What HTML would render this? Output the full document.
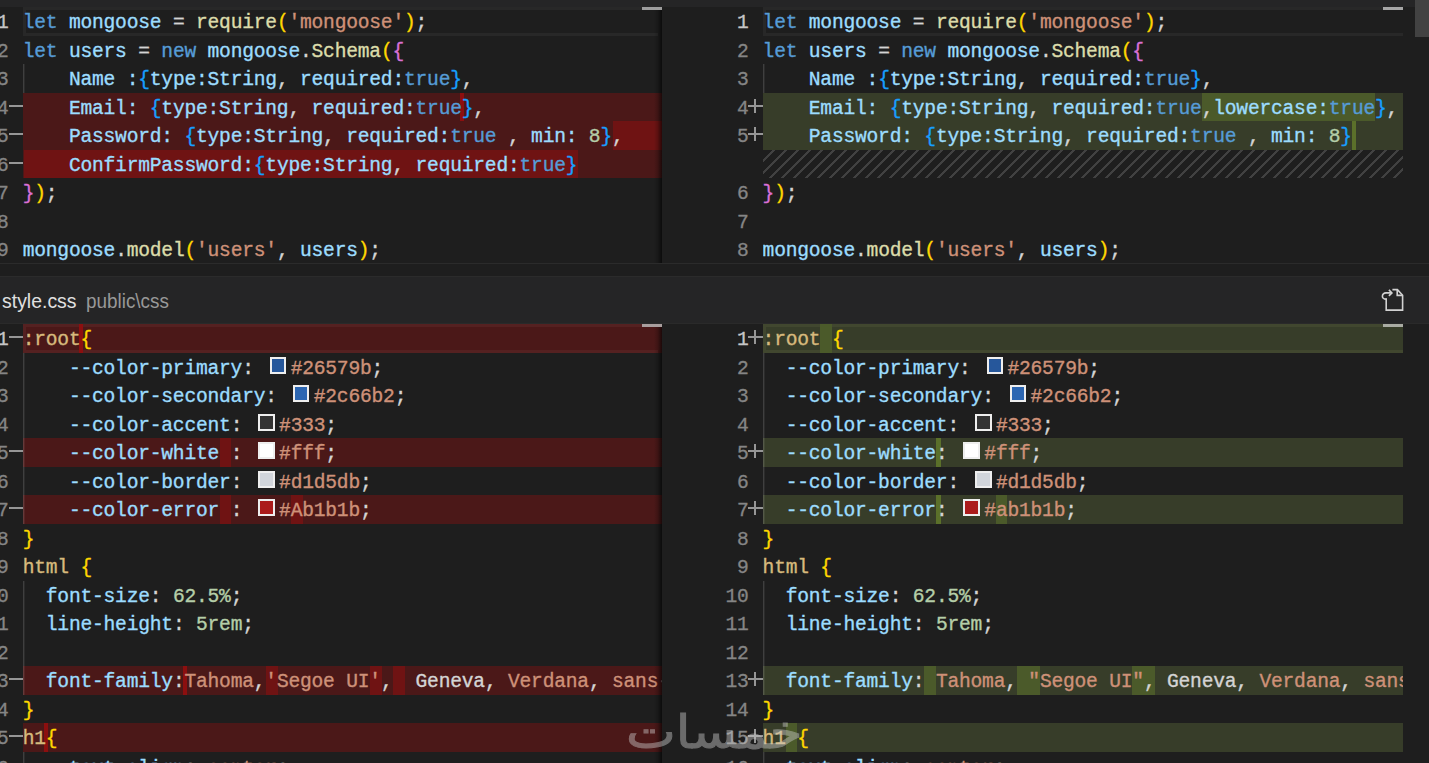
<!DOCTYPE html>
<html lang="en"><head><meta charset="utf-8"><title>Diff view</title>
<style>
html,body{margin:0;padding:0}
body{width:1429px;height:763px;overflow:hidden;background:#1e1e1e;position:relative;font-family:"Liberation Mono","DejaVu Sans Mono",monospace}
.r{position:absolute}
.cl{letter-spacing:-0.2069px;-webkit-text-stroke-width:0.35px;position:absolute;height:28.5px;line-height:28.5px;font-size:19.6px;white-space:pre;overflow:hidden}
.cl span{position:absolute;top:0;white-space:pre}
.ln{letter-spacing:-0.2069px;-webkit-text-stroke-width:0.3px;position:absolute;width:60px;text-align:right;height:28.5px;line-height:28.5px;font-size:19.6px;color:#858585;white-space:pre}
.ln.act{color:#c6c6c6}
.sg{background:#969696}
.sw{position:absolute;top:2.1px;width:16.6px;height:16.6px;box-sizing:border-box;border:2px solid #eeeeee}
.hatch{background-image:linear-gradient(-45deg,#414141 12.5%,transparent 12.5%,transparent 50%,#414141 50%,#414141 62.5%,transparent 62.5%,transparent 100%);background-size:12px 12px}
.hdr{position:absolute;left:0;top:276px;width:1429px;height:48px;background:#252526;box-sizing:border-box;border-top:1.4px solid #2b2b2b;border-bottom:1px solid #2a2a2a}
.hdr span{position:absolute;font-family:"Liberation Sans","DejaVu Sans",sans-serif;white-space:pre;line-height:24px;top:12.1px;transform-origin:0 50%}
.wm{position:absolute;left:626px;top:702.2px;direction:rtl;font-family:"DejaVu Sans",sans-serif;font-size:46px;line-height:60px;color:#cdcdcd;-webkit-text-stroke:1px #cdcdcd;opacity:0.44;white-space:pre;transform:scaleX(1.15);transform-origin:0 0}

</style></head><body>
<div class="r" style="left:0;top:0;width:1429px;height:6.6px;background:#252526"></div>
<div class="r" style="left:23.0px;top:7.25px;width:635.1px;height:28.5px;box-sizing:border-box;border:3px solid #282828;border-right:none"></div>
<div class="ln act" style="left:-51.4px;top:9.25px">1</div>
<div class="cl" style="left:22.70px;top:9.25px;width:638.9px"><span style="left:0.00px;color:#569cd6">let</span><span style="left:34.66px;color:#9cdcfe"> mongoose</span><span style="left:138.66px;color:#d4d4d4"> =</span><span style="left:161.77px;color:#dcdcaa"> require</span><span style="left:254.21px;color:#ffd700">(</span><span style="left:265.76px;color:#ce9178">'mongoose'</span><span style="left:381.31px;color:#ffd700">)</span><span style="left:392.87px;color:#d4d4d4">;</span></div>
<div class="ln" style="left:-51.4px;top:37.75px">2</div>
<div class="cl" style="left:22.70px;top:37.75px;width:638.9px"><span style="left:0.00px;color:#569cd6">let</span><span style="left:34.66px;color:#9cdcfe"> users</span><span style="left:104.00px;color:#d4d4d4"> =</span><span style="left:127.11px;color:#569cd6"> new</span><span style="left:173.32px;color:#9cdcfe"> mongoose</span><span style="left:277.32px;color:#d4d4d4">.</span><span style="left:288.88px;color:#dcdcaa">Schema</span><span style="left:358.20px;color:#ffd700">(</span><span style="left:369.76px;color:#da70d6">{</span></div>
<div class="ln" style="left:-51.4px;top:66.25px">3</div>
<div class="cl" style="left:22.70px;top:66.25px;width:638.9px"><span style="left:0.00px;color:#9cdcfe">    Name</span><span style="left:92.44px;color:#9cdcfe"> :</span><span style="left:115.55px;color:#179fff">{</span><span style="left:127.10px;color:#9cdcfe">type:String</span><span style="left:254.21px;color:#d4d4d4">,</span><span style="left:265.76px;color:#9cdcfe"> required:</span><span style="left:381.31px;color:#569cd6">true</span><span style="left:427.53px;color:#179fff">}</span><span style="left:439.09px;color:#d4d4d4">,</span></div>
<div class="r" style="left:23.0px;top:92.75px;width:638.6px;height:28.5px;background:#4b1818"></div>
<div class="r" style="left:460.29px;top:92.75px;width:4.2px;height:28.5px;background:#8c0f0f"></div>
<div class="ln" style="left:-51.4px;top:94.75px">4</div>
<div class="r sg" style="left:8.8px;top:104.55px;width:14.4px;height:2px"></div>
<div class="cl" style="left:22.70px;top:94.75px;width:638.9px"><span style="left:0.00px;color:#9cdcfe">    Email:</span><span style="left:115.55px;color:#179fff"> {</span><span style="left:138.66px;color:#9cdcfe">type:String</span><span style="left:265.76px;color:#d4d4d4">,</span><span style="left:277.32px;color:#9cdcfe"> required:</span><span style="left:392.87px;color:#569cd6">true</span><span style="left:439.09px;color:#179fff">}</span><span style="left:450.65px;color:#d4d4d4">,</span></div>
<div class="r" style="left:23.0px;top:121.25px;width:638.6px;height:28.5px;background:#4b1818"></div>
<div class="r" style="left:612.80px;top:121.25px;width:48.80px;height:28.5px;background:#6f1313"></div>
<div class="ln" style="left:-51.4px;top:123.25px">5</div>
<div class="r sg" style="left:8.8px;top:133.05px;width:14.4px;height:2px"></div>
<div class="cl" style="left:22.70px;top:123.25px;width:638.9px"><span style="left:0.00px;color:#9cdcfe">    Password:</span><span style="left:150.22px;color:#179fff"> {</span><span style="left:173.32px;color:#9cdcfe">type:String</span><span style="left:300.43px;color:#d4d4d4">,</span><span style="left:311.98px;color:#9cdcfe"> required:</span><span style="left:427.53px;color:#569cd6">true</span><span style="left:473.75px;color:#d4d4d4"> ,</span><span style="left:496.87px;color:#9cdcfe"> min:</span><span style="left:554.64px;color:#b5cea8"> 8</span><span style="left:577.75px;color:#179fff">}</span><span style="left:589.30px;color:#d4d4d4">,</span></div>
<div class="r" style="left:23.0px;top:149.75px;width:638.6px;height:28.5px;background:#4b1818"></div>
<div class="r" style="left:23.50px;top:149.75px;width:554.64px;height:28.5px;background:#6f1313"></div>
<div class="ln" style="left:-51.4px;top:151.75px">6</div>
<div class="r sg" style="left:8.8px;top:161.55px;width:14.4px;height:2px"></div>
<div class="cl" style="left:22.70px;top:151.75px;width:638.9px"><span style="left:0.00px;color:#9cdcfe">    ConfirmPassword:</span><span style="left:231.10px;color:#179fff">{</span><span style="left:242.66px;color:#9cdcfe">type:String</span><span style="left:369.76px;color:#d4d4d4">,</span><span style="left:381.31px;color:#9cdcfe"> required:</span><span style="left:496.87px;color:#569cd6">true</span><span style="left:543.09px;color:#179fff">}</span></div>
<div class="ln" style="left:-51.4px;top:180.25px">7</div>
<div class="cl" style="left:22.70px;top:180.25px;width:638.9px"><span style="left:0.00px;color:#da70d6">}</span><span style="left:11.55px;color:#ffd700">)</span><span style="left:23.11px;color:#d4d4d4">;</span></div>
<div class="ln" style="left:-51.4px;top:208.75px">8</div>
<div class="ln" style="left:-51.4px;top:237.25px">9</div>
<div class="cl" style="left:22.70px;top:237.25px;width:638.9px"><span style="left:0.00px;color:#9cdcfe">mongoose</span><span style="left:92.44px;color:#d4d4d4">.</span><span style="left:104.00px;color:#dcdcaa">model</span><span style="left:161.77px;color:#ffd700">(</span><span style="left:173.33px;color:#ce9178">'users'</span><span style="left:254.21px;color:#d4d4d4">,</span><span style="left:265.76px;color:#9cdcfe"> users</span><span style="left:335.09px;color:#ffd700">)</span><span style="left:346.65px;color:#d4d4d4">;</span></div>
<div class="r" style="left:23.0px;top:64.25px;width:1px;height:28.50px;background:rgba(255,255,255,0.15)"></div>
<div class="r" style="left:24.0px;top:64.25px;width:1px;height:28.50px;background:rgba(255,255,255,0.06)"></div>
<div class="r" style="left:763.0px;top:7.25px;width:640.0px;height:28.5px;box-sizing:border-box;border:3px solid #282828;border-right:none"></div>
<div class="ln act" style="left:688.6px;top:9.25px">1</div>
<div class="cl" style="left:762.60px;top:9.25px;width:640.4px"><span style="left:0.00px;color:#569cd6">let</span><span style="left:34.66px;color:#9cdcfe"> mongoose</span><span style="left:138.66px;color:#d4d4d4"> =</span><span style="left:161.77px;color:#dcdcaa"> require</span><span style="left:254.21px;color:#ffd700">(</span><span style="left:265.76px;color:#ce9178">'mongoose'</span><span style="left:381.31px;color:#ffd700">)</span><span style="left:392.87px;color:#d4d4d4">;</span></div>
<div class="ln" style="left:688.6px;top:37.75px">2</div>
<div class="cl" style="left:762.60px;top:37.75px;width:640.4px"><span style="left:0.00px;color:#569cd6">let</span><span style="left:34.66px;color:#9cdcfe"> users</span><span style="left:104.00px;color:#d4d4d4"> =</span><span style="left:127.11px;color:#569cd6"> new</span><span style="left:173.32px;color:#9cdcfe"> mongoose</span><span style="left:277.32px;color:#d4d4d4">.</span><span style="left:288.88px;color:#dcdcaa">Schema</span><span style="left:358.20px;color:#ffd700">(</span><span style="left:369.76px;color:#da70d6">{</span></div>
<div class="ln" style="left:688.6px;top:66.25px">3</div>
<div class="cl" style="left:762.60px;top:66.25px;width:640.4px"><span style="left:0.00px;color:#9cdcfe">    Name</span><span style="left:92.44px;color:#9cdcfe"> :</span><span style="left:115.55px;color:#179fff">{</span><span style="left:127.10px;color:#9cdcfe">type:String</span><span style="left:254.21px;color:#d4d4d4">,</span><span style="left:265.76px;color:#9cdcfe"> required:</span><span style="left:381.31px;color:#569cd6">true</span><span style="left:427.53px;color:#179fff">}</span><span style="left:439.09px;color:#d4d4d4">,</span></div>
<div class="r" style="left:763.0px;top:92.75px;width:640.0px;height:28.5px;background:#373d29"></div>
<div class="r" style="left:1201.69px;top:92.75px;width:173.33px;height:28.5px;background:#4b5a2a"></div>
<div class="ln" style="left:688.6px;top:94.75px">4</div>
<div class="r sg" style="left:748.2px;top:104.55px;width:14.4px;height:2px"></div>
<div class="r sg" style="left:754.4px;top:98.55px;width:2px;height:14px"></div>
<div class="cl" style="left:762.60px;top:94.75px;width:640.4px"><span style="left:0.00px;color:#9cdcfe">    Email:</span><span style="left:115.55px;color:#179fff"> {</span><span style="left:138.66px;color:#9cdcfe">type:String</span><span style="left:265.76px;color:#d4d4d4">,</span><span style="left:277.32px;color:#9cdcfe"> required:</span><span style="left:392.87px;color:#569cd6">true</span><span style="left:439.09px;color:#d4d4d4">,</span><span style="left:450.65px;color:#9cdcfe">lowercase:</span><span style="left:566.20px;color:#569cd6">true</span><span style="left:612.42px;color:#179fff">}</span><span style="left:623.97px;color:#d4d4d4">,</span></div>
<div class="r" style="left:763.0px;top:121.25px;width:640.0px;height:28.5px;background:#373d29"></div>
<div class="r" style="left:1352.31px;top:121.25px;width:4.2px;height:28.5px;background:#5b702a"></div>
<div class="ln" style="left:688.6px;top:123.25px">5</div>
<div class="r sg" style="left:748.2px;top:133.05px;width:14.4px;height:2px"></div>
<div class="r sg" style="left:754.4px;top:127.05px;width:2px;height:14px"></div>
<div class="cl" style="left:762.60px;top:123.25px;width:640.4px"><span style="left:0.00px;color:#9cdcfe">    Password:</span><span style="left:150.22px;color:#179fff"> {</span><span style="left:173.32px;color:#9cdcfe">type:String</span><span style="left:300.43px;color:#d4d4d4">,</span><span style="left:311.98px;color:#9cdcfe"> required:</span><span style="left:427.53px;color:#569cd6">true</span><span style="left:473.75px;color:#d4d4d4"> ,</span><span style="left:496.87px;color:#9cdcfe"> min:</span><span style="left:554.64px;color:#b5cea8"> 8</span><span style="left:577.75px;color:#179fff">}</span></div>
<div class="r hatch" style="left:763.0px;top:149.75px;width:640.0px;height:28.5px"></div>
<div class="ln" style="left:688.6px;top:180.25px">6</div>
<div class="cl" style="left:762.60px;top:180.25px;width:640.4px"><span style="left:0.00px;color:#da70d6">}</span><span style="left:11.55px;color:#ffd700">)</span><span style="left:23.11px;color:#d4d4d4">;</span></div>
<div class="ln" style="left:688.6px;top:208.75px">7</div>
<div class="ln" style="left:688.6px;top:237.25px">8</div>
<div class="cl" style="left:762.60px;top:237.25px;width:640.4px"><span style="left:0.00px;color:#9cdcfe">mongoose</span><span style="left:92.44px;color:#d4d4d4">.</span><span style="left:104.00px;color:#dcdcaa">model</span><span style="left:161.77px;color:#ffd700">(</span><span style="left:173.33px;color:#ce9178">'users'</span><span style="left:254.21px;color:#d4d4d4">,</span><span style="left:265.76px;color:#9cdcfe"> users</span><span style="left:335.09px;color:#ffd700">)</span><span style="left:346.65px;color:#d4d4d4">;</span></div>
<div class="r" style="left:763.0px;top:64.25px;width:1px;height:28.50px;background:rgba(255,255,255,0.15)"></div>
<div class="r" style="left:764.0px;top:64.25px;width:1px;height:28.50px;background:rgba(255,255,255,0.06)"></div>
<div class="r" style="left:0;top:262.8px;width:1429px;height:14px;background:#1e1e1e;border-top:1.4px solid #2b2b2b;box-sizing:border-box"></div>
<div class="r" style="left:23.0px;top:324.40px;width:638.6px;height:28.5px;background:#4b1818"></div>
<div class="r" style="left:23.0px;top:324.40px;width:635.1px;height:28.5px;box-sizing:border-box;border:3px solid #552121;border-right:none"></div>
<div class="r" style="left:78.98px;top:324.40px;width:4.2px;height:28.5px;background:#8c0f0f"></div>
<div class="ln act" style="left:-51.4px;top:326.40px">1</div>
<div class="r sg" style="left:8.8px;top:336.20px;width:14.4px;height:2px"></div>
<div class="cl" style="left:22.70px;top:326.40px;width:638.9px"><span style="left:0.00px;color:#d7ba7d">:root</span><span style="left:57.77px;color:#ffd700">{</span></div>
<div class="ln" style="left:-51.4px;top:354.90px">2</div>
<div class="cl" style="left:22.70px;top:354.90px;width:638.9px"><span style="left:0.00px;color:#9cdcfe">    --color-primary</span><span style="left:219.54px;color:#d4d4d4">: </span><i class="sw" style="left:247.05px;background:#26579b"></i><span style="left:267.95px;color:#ce9178">#26579b</span><span style="left:348.84px;color:#d4d4d4">;</span></div>
<div class="ln" style="left:-51.4px;top:383.40px">3</div>
<div class="cl" style="left:22.70px;top:383.40px;width:638.9px"><span style="left:0.00px;color:#9cdcfe">    --color-secondary</span><span style="left:242.66px;color:#d4d4d4">: </span><i class="sw" style="left:270.16px;background:#2c66b2"></i><span style="left:291.06px;color:#ce9178">#2c66b2</span><span style="left:371.95px;color:#d4d4d4">;</span></div>
<div class="ln" style="left:-51.4px;top:411.90px">4</div>
<div class="cl" style="left:22.70px;top:411.90px;width:638.9px"><span style="left:0.00px;color:#9cdcfe">    --color-accent</span><span style="left:207.99px;color:#d4d4d4">: </span><i class="sw" style="left:235.50px;background:#333"></i><span style="left:256.40px;color:#ce9178">#333</span><span style="left:302.62px;color:#d4d4d4">;</span></div>
<div class="r" style="left:23.0px;top:438.40px;width:638.6px;height:28.5px;background:#4b1818"></div>
<div class="r" style="left:219.94px;top:438.40px;width:11.56px;height:28.5px;background:#6f1313"></div>
<div class="ln" style="left:-51.4px;top:440.40px">5</div>
<div class="r sg" style="left:8.8px;top:450.20px;width:14.4px;height:2px"></div>
<div class="cl" style="left:22.70px;top:440.40px;width:638.9px"><span style="left:0.00px;color:#9cdcfe">    --color-white</span><span style="left:196.44px;color:#d4d4d4"> : </span><i class="sw" style="left:235.50px;background:#fff"></i><span style="left:256.40px;color:#ce9178">#fff</span><span style="left:302.62px;color:#d4d4d4">;</span></div>
<div class="ln" style="left:-51.4px;top:468.90px">6</div>
<div class="cl" style="left:22.70px;top:468.90px;width:638.9px"><span style="left:0.00px;color:#9cdcfe">    --color-border</span><span style="left:207.99px;color:#d4d4d4">: </span><i class="sw" style="left:235.50px;background:#d1d5db"></i><span style="left:256.40px;color:#ce9178">#d1d5db</span><span style="left:337.29px;color:#d4d4d4">;</span></div>
<div class="r" style="left:23.0px;top:495.40px;width:638.6px;height:28.5px;background:#4b1818"></div>
<div class="r" style="left:219.94px;top:495.40px;width:11.56px;height:28.5px;background:#6f1313"></div>
<div class="r" style="left:291.45px;top:495.40px;width:11.56px;height:28.5px;background:#6f1313"></div>
<div class="ln" style="left:-51.4px;top:497.40px">7</div>
<div class="r sg" style="left:8.8px;top:507.20px;width:14.4px;height:2px"></div>
<div class="cl" style="left:22.70px;top:497.40px;width:638.9px"><span style="left:0.00px;color:#9cdcfe">    --color-error</span><span style="left:196.44px;color:#d4d4d4"> : </span><i class="sw" style="left:235.50px;background:#Ab1b1b"></i><span style="left:256.40px;color:#ce9178">#Ab1b1b</span><span style="left:337.28px;color:#d4d4d4">;</span></div>
<div class="ln" style="left:-51.4px;top:525.90px">8</div>
<div class="cl" style="left:22.70px;top:525.90px;width:638.9px"><span style="left:0.00px;color:#ffd700">}</span></div>
<div class="ln" style="left:-51.4px;top:554.40px">9</div>
<div class="cl" style="left:22.70px;top:554.40px;width:638.9px"><span style="left:0.00px;color:#d7ba7d">html</span><span style="left:46.22px;color:#ffd700"> {</span></div>
<div class="ln" style="left:-51.4px;top:582.90px">10</div>
<div class="cl" style="left:22.70px;top:582.90px;width:638.9px"><span style="left:0.00px;color:#9cdcfe">  font-size</span><span style="left:127.10px;color:#d4d4d4">:</span><span style="left:138.66px;color:#b5cea8"> 62.5%</span><span style="left:207.99px;color:#d4d4d4">;</span></div>
<div class="ln" style="left:-51.4px;top:611.40px">11</div>
<div class="cl" style="left:22.70px;top:611.40px;width:638.9px"><span style="left:0.00px;color:#9cdcfe">  line-height</span><span style="left:150.22px;color:#d4d4d4">:</span><span style="left:161.77px;color:#b5cea8"> 5rem</span><span style="left:219.55px;color:#d4d4d4">;</span></div>
<div class="ln" style="left:-51.4px;top:639.90px">12</div>
<div class="r" style="left:23.0px;top:666.40px;width:638.6px;height:28.5px;background:#4b1818"></div>
<div class="r" style="left:266.16px;top:666.40px;width:11.56px;height:28.5px;background:#6f1313"></div>
<div class="r" style="left:370.15px;top:666.40px;width:11.56px;height:28.5px;background:#6f1313"></div>
<div class="r" style="left:393.26px;top:666.40px;width:11.56px;height:28.5px;background:#6f1313"></div>
<div class="r" style="left:182.97px;top:666.40px;width:4.2px;height:28.5px;background:#8c0f0f"></div>
<div class="ln" style="left:-51.4px;top:668.40px">13</div>
<div class="r sg" style="left:8.8px;top:678.20px;width:14.4px;height:2px"></div>
<div class="cl" style="left:22.70px;top:668.40px;width:638.9px"><span style="left:0.00px;color:#9cdcfe">  font-family</span><span style="left:150.22px;color:#d4d4d4">:</span><span style="left:161.77px;color:#ce9178">Tahoma</span><span style="left:231.10px;color:#d4d4d4">,</span><span style="left:242.66px;color:#ce9178">'Segoe UI'</span><span style="left:358.21px;color:#d4d4d4">,</span><span style="left:369.76px;color:#d4d4d4">  Geneva</span><span style="left:462.20px;color:#d4d4d4">,</span><span style="left:473.76px;color:#ce9178"> Verdana</span><span style="left:566.20px;color:#d4d4d4">,</span><span style="left:577.75px;color:#ce9178"> sans-serif</span><span style="left:704.86px;color:#d4d4d4">;</span></div>
<div class="ln" style="left:-51.4px;top:696.90px">14</div>
<div class="cl" style="left:22.70px;top:696.90px;width:638.9px"><span style="left:0.00px;color:#ffd700">}</span></div>
<div class="r" style="left:23.0px;top:723.40px;width:638.6px;height:28.5px;background:#4b1818"></div>
<div class="r" style="left:44.31px;top:723.40px;width:4.2px;height:28.5px;background:#8c0f0f"></div>
<div class="ln" style="left:-51.4px;top:725.40px">15</div>
<div class="r sg" style="left:8.8px;top:735.20px;width:14.4px;height:2px"></div>
<div class="cl" style="left:22.70px;top:725.40px;width:638.9px"><span style="left:0.00px;color:#d7ba7d">h1</span><span style="left:23.11px;color:#ffd700">{</span></div>
<div class="ln" style="left:-51.4px;top:754.90px">16</div>
<div class="cl" style="left:22.70px;top:754.90px;width:638.9px"><span style="left:0.00px;color:#9cdcfe">    text-align</span><span style="left:161.77px;color:#d4d4d4">:</span><span style="left:173.32px;color:#ce9178"> center</span><span style="left:254.21px;color:#d4d4d4">;</span></div>
<div class="r" style="left:23.0px;top:352.90px;width:1px;height:171.00px;background:rgba(255,255,255,0.15)"></div>
<div class="r" style="left:24.0px;top:352.90px;width:1px;height:171.00px;background:rgba(255,255,255,0.06)"></div>
<div class="r" style="left:23.0px;top:580.90px;width:1px;height:114.00px;background:rgba(255,255,255,0.15)"></div>
<div class="r" style="left:24.0px;top:580.90px;width:1px;height:114.00px;background:rgba(255,255,255,0.06)"></div>
<div class="r" style="left:23.0px;top:751.90px;width:1px;height:28.50px;background:rgba(255,255,255,0.15)"></div>
<div class="r" style="left:24.0px;top:751.90px;width:1px;height:28.50px;background:rgba(255,255,255,0.06)"></div>
<div class="r" style="left:763.0px;top:324.40px;width:640.0px;height:28.5px;background:#373d29"></div>
<div class="r" style="left:763.0px;top:324.40px;width:640.0px;height:28.5px;box-sizing:border-box;border:3px solid #41472f;border-right:none"></div>
<div class="r" style="left:820.38px;top:324.40px;width:11.56px;height:28.5px;background:#4b5a2a"></div>
<div class="ln act" style="left:688.6px;top:326.40px">1</div>
<div class="r sg" style="left:748.2px;top:336.20px;width:14.4px;height:2px"></div>
<div class="r sg" style="left:754.4px;top:330.20px;width:2px;height:14px"></div>
<div class="cl" style="left:762.60px;top:326.40px;width:640.4px"><span style="left:0.00px;color:#d7ba7d">:root</span><span style="left:57.77px;color:#ffd700"> {</span></div>
<div class="ln" style="left:688.6px;top:354.90px">2</div>
<div class="cl" style="left:762.60px;top:354.90px;width:640.4px"><span style="left:0.00px;color:#9cdcfe">  --color-primary</span><span style="left:196.44px;color:#d4d4d4">: </span><i class="sw" style="left:223.95px;background:#26579b"></i><span style="left:244.85px;color:#ce9178">#26579b</span><span style="left:325.73px;color:#d4d4d4">;</span></div>
<div class="ln" style="left:688.6px;top:383.40px">3</div>
<div class="cl" style="left:762.60px;top:383.40px;width:640.4px"><span style="left:0.00px;color:#9cdcfe">  --color-secondary</span><span style="left:219.54px;color:#d4d4d4">: </span><i class="sw" style="left:247.05px;background:#2c66b2"></i><span style="left:267.95px;color:#ce9178">#2c66b2</span><span style="left:348.84px;color:#d4d4d4">;</span></div>
<div class="ln" style="left:688.6px;top:411.90px">4</div>
<div class="cl" style="left:762.60px;top:411.90px;width:640.4px"><span style="left:0.00px;color:#9cdcfe">  --color-accent</span><span style="left:184.88px;color:#d4d4d4">: </span><i class="sw" style="left:212.39px;background:#333"></i><span style="left:233.29px;color:#ce9178">#333</span><span style="left:279.51px;color:#d4d4d4">;</span></div>
<div class="r" style="left:763.0px;top:438.40px;width:640.0px;height:28.5px;background:#373d29"></div>
<div class="r" style="left:936.32px;top:438.40px;width:4.2px;height:28.5px;background:#5b702a"></div>
<div class="ln" style="left:688.6px;top:440.40px">5</div>
<div class="r sg" style="left:748.2px;top:450.20px;width:14.4px;height:2px"></div>
<div class="r sg" style="left:754.4px;top:444.20px;width:2px;height:14px"></div>
<div class="cl" style="left:762.60px;top:440.40px;width:640.4px"><span style="left:0.00px;color:#9cdcfe">  --color-white</span><span style="left:173.32px;color:#d4d4d4">: </span><i class="sw" style="left:200.84px;background:#fff"></i><span style="left:221.74px;color:#ce9178">#fff</span><span style="left:267.96px;color:#d4d4d4">;</span></div>
<div class="ln" style="left:688.6px;top:468.90px">6</div>
<div class="cl" style="left:762.60px;top:468.90px;width:640.4px"><span style="left:0.00px;color:#9cdcfe">  --color-border</span><span style="left:184.88px;color:#d4d4d4">: </span><i class="sw" style="left:212.39px;background:#d1d5db"></i><span style="left:233.29px;color:#ce9178">#d1d5db</span><span style="left:314.18px;color:#d4d4d4">;</span></div>
<div class="r" style="left:763.0px;top:495.40px;width:640.0px;height:28.5px;background:#373d29"></div>
<div class="r" style="left:995.89px;top:495.40px;width:11.55px;height:28.5px;background:#4b5a2a"></div>
<div class="r" style="left:936.32px;top:495.40px;width:4.2px;height:28.5px;background:#5b702a"></div>
<div class="ln" style="left:688.6px;top:497.40px">7</div>
<div class="r sg" style="left:748.2px;top:507.20px;width:14.4px;height:2px"></div>
<div class="r sg" style="left:754.4px;top:501.20px;width:2px;height:14px"></div>
<div class="cl" style="left:762.60px;top:497.40px;width:640.4px"><span style="left:0.00px;color:#9cdcfe">  --color-error</span><span style="left:173.32px;color:#d4d4d4">: </span><i class="sw" style="left:200.84px;background:#ab1b1b"></i><span style="left:221.74px;color:#ce9178">#ab1b1b</span><span style="left:302.62px;color:#d4d4d4">;</span></div>
<div class="ln" style="left:688.6px;top:525.90px">8</div>
<div class="cl" style="left:762.60px;top:525.90px;width:640.4px"><span style="left:0.00px;color:#ffd700">}</span></div>
<div class="ln" style="left:688.6px;top:554.40px">9</div>
<div class="cl" style="left:762.60px;top:554.40px;width:640.4px"><span style="left:0.00px;color:#d7ba7d">html</span><span style="left:46.22px;color:#ffd700"> {</span></div>
<div class="ln" style="left:688.6px;top:582.90px">10</div>
<div class="cl" style="left:762.60px;top:582.90px;width:640.4px"><span style="left:0.00px;color:#9cdcfe">  font-size</span><span style="left:127.10px;color:#d4d4d4">:</span><span style="left:138.66px;color:#b5cea8"> 62.5%</span><span style="left:207.99px;color:#d4d4d4">;</span></div>
<div class="ln" style="left:688.6px;top:611.40px">11</div>
<div class="cl" style="left:762.60px;top:611.40px;width:640.4px"><span style="left:0.00px;color:#9cdcfe">  line-height</span><span style="left:150.22px;color:#d4d4d4">:</span><span style="left:161.77px;color:#b5cea8"> 5rem</span><span style="left:219.55px;color:#d4d4d4">;</span></div>
<div class="ln" style="left:688.6px;top:639.90px">12</div>
<div class="r" style="left:763.0px;top:666.40px;width:640.0px;height:28.5px;background:#373d29"></div>
<div class="r" style="left:924.37px;top:666.40px;width:11.56px;height:28.5px;background:#4b5a2a"></div>
<div class="r" style="left:1016.81px;top:666.40px;width:23.11px;height:28.5px;background:#4b5a2a"></div>
<div class="r" style="left:1132.36px;top:666.40px;width:23.11px;height:28.5px;background:#4b5a2a"></div>
<div class="ln" style="left:688.6px;top:668.40px">13</div>
<div class="r sg" style="left:748.2px;top:678.20px;width:14.4px;height:2px"></div>
<div class="r sg" style="left:754.4px;top:672.20px;width:2px;height:14px"></div>
<div class="cl" style="left:762.60px;top:668.40px;width:640.4px"><span style="left:0.00px;color:#9cdcfe">  font-family</span><span style="left:150.22px;color:#d4d4d4">:</span><span style="left:161.77px;color:#ce9178"> Tahoma</span><span style="left:242.66px;color:#d4d4d4">,</span><span style="left:254.21px;color:#ce9178"> "Segoe UI"</span><span style="left:381.31px;color:#d4d4d4">,</span><span style="left:392.87px;color:#d4d4d4"> Geneva</span><span style="left:473.75px;color:#d4d4d4">,</span><span style="left:485.31px;color:#ce9178"> Verdana</span><span style="left:577.75px;color:#d4d4d4">,</span><span style="left:589.30px;color:#ce9178"> sans-serif</span><span style="left:716.41px;color:#d4d4d4">;</span></div>
<div class="ln" style="left:688.6px;top:696.90px">14</div>
<div class="cl" style="left:762.60px;top:696.90px;width:640.4px"><span style="left:0.00px;color:#ffd700">}</span></div>
<div class="r" style="left:763.0px;top:723.40px;width:640.0px;height:28.5px;background:#373d29"></div>
<div class="r" style="left:785.71px;top:723.40px;width:11.55px;height:28.5px;background:#4b5a2a"></div>
<div class="ln" style="left:688.6px;top:725.40px">15</div>
<div class="r sg" style="left:748.2px;top:735.20px;width:14.4px;height:2px"></div>
<div class="r sg" style="left:754.4px;top:729.20px;width:2px;height:14px"></div>
<div class="cl" style="left:762.60px;top:725.40px;width:640.4px"><span style="left:0.00px;color:#d7ba7d">h1</span><span style="left:23.11px;color:#ffd700"> {</span></div>
<div class="ln" style="left:688.6px;top:754.90px">16</div>
<div class="cl" style="left:762.60px;top:754.90px;width:640.4px"><span style="left:0.00px;color:#9cdcfe">  text-align</span><span style="left:138.66px;color:#d4d4d4">:</span><span style="left:150.22px;color:#ce9178"> center</span><span style="left:231.10px;color:#d4d4d4">;</span></div>
<div class="r" style="left:763.0px;top:352.90px;width:1px;height:171.00px;background:rgba(255,255,255,0.15)"></div>
<div class="r" style="left:764.0px;top:352.90px;width:1px;height:171.00px;background:rgba(255,255,255,0.06)"></div>
<div class="r" style="left:763.0px;top:580.90px;width:1px;height:114.00px;background:rgba(255,255,255,0.15)"></div>
<div class="r" style="left:764.0px;top:580.90px;width:1px;height:114.00px;background:rgba(255,255,255,0.06)"></div>
<div class="r" style="left:763.0px;top:751.90px;width:1px;height:28.50px;background:rgba(255,255,255,0.15)"></div>
<div class="r" style="left:764.0px;top:751.90px;width:1px;height:28.50px;background:rgba(255,255,255,0.06)"></div>
<div class="r" style="left:653.5px;top:6.6px;width:8.5px;height:256.2px;background:linear-gradient(90deg,rgba(0,0,0,0) 0%,rgba(0,0,0,0.18) 45%,rgba(0,0,0,0.62) 100%)"></div>
<div class="r" style="left:653.5px;top:324px;width:8.5px;height:439px;background:linear-gradient(90deg,rgba(0,0,0,0) 0%,rgba(0,0,0,0.18) 45%,rgba(0,0,0,0.62) 100%)"></div>
<div class="r" style="left:642px;top:6.8px;width:20px;height:3.2px;background:#9d9d9d"></div>
<div class="r" style="left:1383px;top:6.9px;width:20px;height:3.2px;background:#a6a6a6"></div>
<div class="r" style="left:642px;top:323.9px;width:20px;height:3.1px;background:#a89e9e"></div>
<div class="r" style="left:1383px;top:324px;width:20px;height:3px;background:#a9aba3"></div>
<div class="r" style="left:1403px;top:6.6px;width:26px;height:256px;background:#1e1e1e"></div>
<div class="r" style="left:1403px;top:324px;width:26px;height:439px;background:#1e1e1e"></div>
<div class="r" style="left:1415px;top:0;width:14px;height:36.8px;background:#424242"></div>
<div class="hdr"><span style="left:2.2px;font-size:20.8px;color:#e0e0e0;transform:scaleX(0.935)">style.css</span><span style="left:86.4px;font-size:20.8px;color:#989898;transform:scaleX(0.908)">public\css</span>
<svg style="position:absolute;left:1380px;top:9.9px" width="26" height="26" viewBox="0 0 26 26" fill="none" stroke="#d2d2d2" stroke-width="1.6" stroke-linejoin="miter"><path d="M6.2 11.2V23.1H22.6V8.2L17.4 2.6H12.4"/><path d="M17.2 2.8V8.4H22.4"/><path d="M6.4 12.2C3.4 12.2 2.4 10.6 2.4 9.2C2.4 7.4 3.8 5.9 6 5.9H11.6"/><path d="M8.9 2.9L11.9 5.9L8.9 8.9"/></svg>
</div>
<div class="wm">خمسات</div>
</body></html>
